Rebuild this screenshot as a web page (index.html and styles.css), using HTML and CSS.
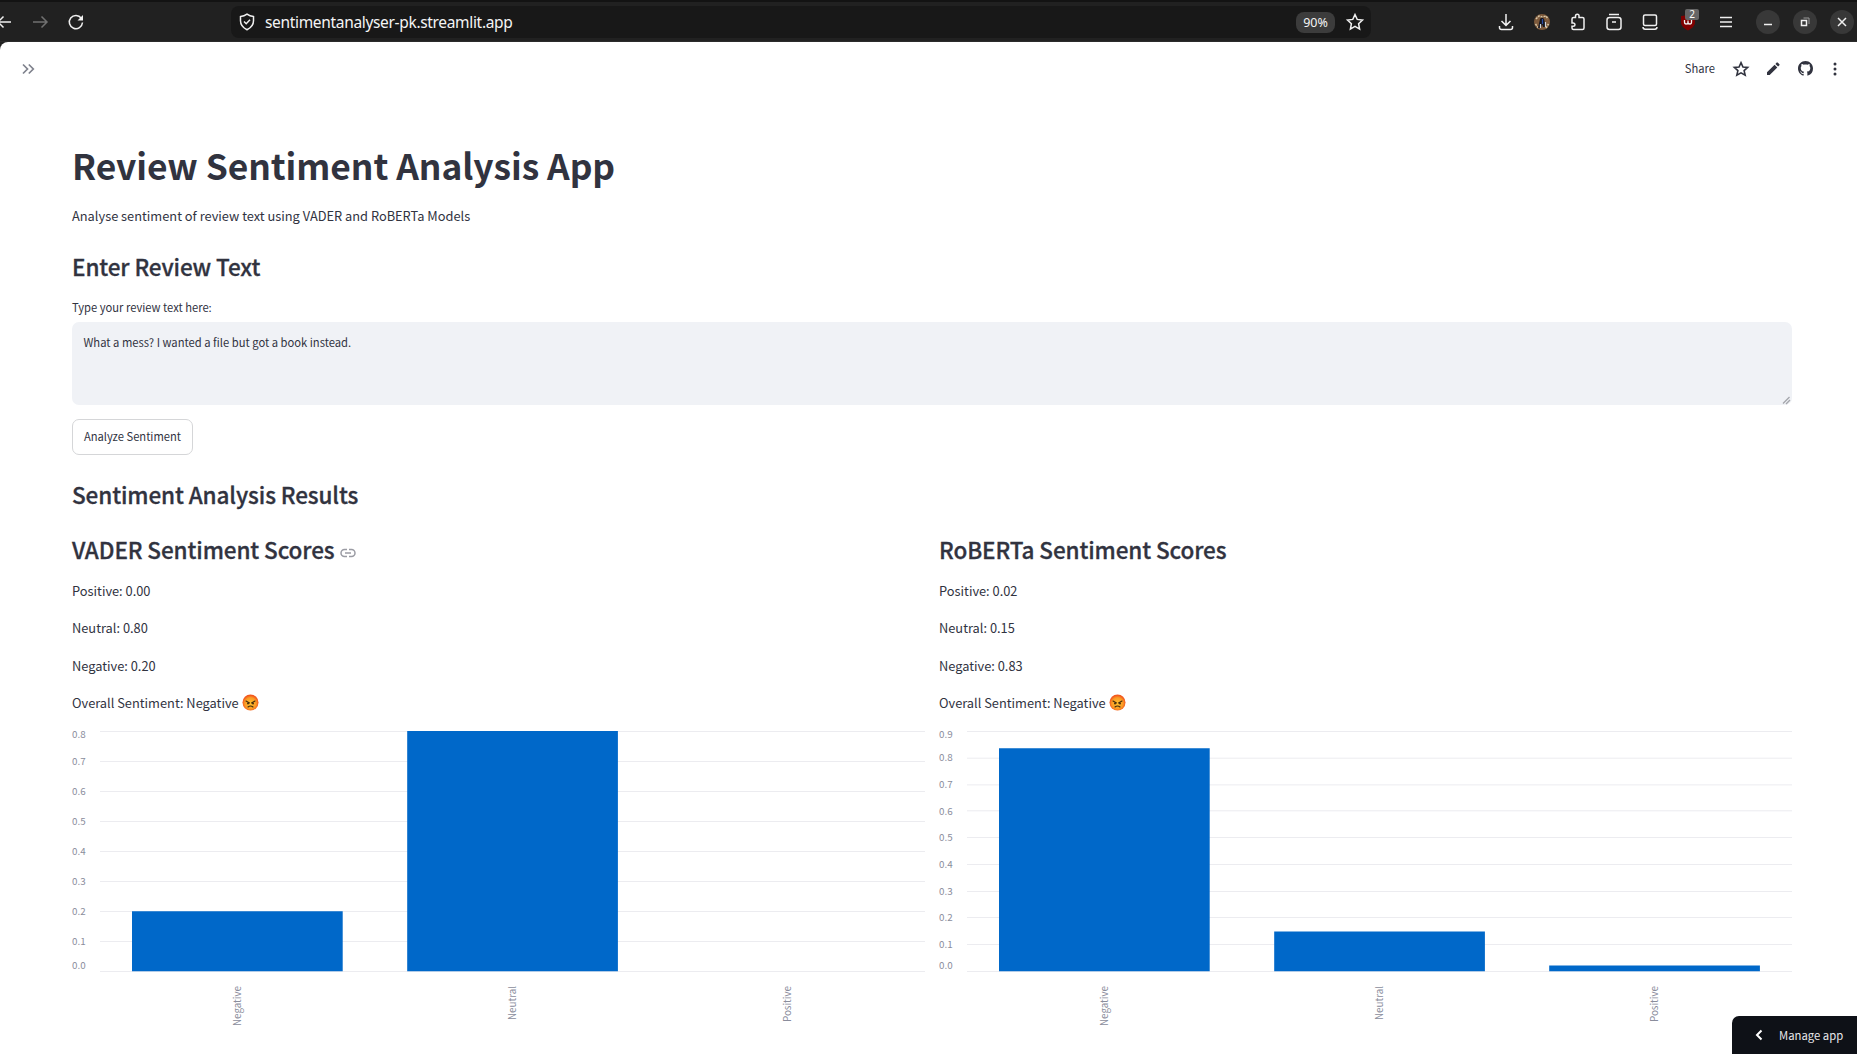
FILE: index.html
```html
<!DOCTYPE html>
<html lang="en">
<head>
<meta charset="utf-8">
<title>Review Sentiment Analysis App</title>
<link rel="stylesheet" href="styles.css">
</head>
<body>
<header class="browser">
  <div class="nav">
    <svg width="12" height="16" viewBox="0 0 12 16"><path d="M-3 8H11M3.500 2.500L-2 8l5.500 5.500" /></svg>
    <svg class="dim" width="16" height="16" viewBox="0 0 16 16"><path d="M1 8h13.500M9.500 2.500L15 8l-5.500 5.500"/></svg>
    <svg class="reload" width="16" height="16" viewBox="0 0 16 16"><path d="M13.300 4.200A6.600 6.600 0 1 0 14.500 8.500"/><path class="solid" d="M15 1v5.500H9.500z"/></svg>
  </div>
  <div class="urlbar">
    <svg width="16" height="18" viewBox="0 0 16 18"><path d="M8 1.200c2 1.500 4 2.200 6.500 2.400v4.200c0 4-2.500 7-6.500 8.900-4-1.900-6.500-4.900-6.500-8.900V3.600C4 3.400 6 2.700 8 1.200z"/><path d="M5 8.500l2.200 2.200L11 6.800"/></svg>
    <span class="url">sentimentanalyser-pk.streamlit.app</span>
    <span class="zoom">90%</span>
    <svg width="18" height="18" viewBox="0 0 18 18"><path d="M9 1.500l2.200 4.900 5.300.6-3.900 3.700 1 5.400L9 13.400l-4.600 2.700 1-5.400L1.500 7l5.300-.6z"/></svg>
  </div>
  <div class="tools">
    <svg width="16" height="18" viewBox="0 0 16 18"><path d="M8 1v11M3.500 8L8 12.400 12.500 8M1.500 13v1.500q0 2 2 2h9q2 0 2-2V13"/></svg>
    <svg width="16" height="18" viewBox="0 0 16 18"><circle cx="8" cy="9" r="8" fill="#7d5a3c" stroke="none"/><path d="M2 6l3-3 3 1 4-1 2 3M1.500 11l3 4M12 15l2.500-4" stroke="#d9c8a8" stroke-width="1.500" stroke-dasharray="2 1"/><path d="M6 6q2-3 4 0l2 8H9l-1-3-1 4H4z" fill="#15151f" stroke="none"/><path d="M8.500 6v5" stroke="#2c4fa5" stroke-width="1.200"/><path d="M6.500 11v4M11.500 9v5" stroke="#cfd6dc" stroke-width="1.200"/></svg>
    <svg width="16" height="18" viewBox="0 0 16 18"><path d="M2 7.500V6q0-1.500 1.500-1.500h2V3q0-1.800 1.800-1.800T9 3v1.500h3.500Q14 4.500 14 6v9q0 1.500-1.500 1.500h-9Q2 16.500 2 15v-1.800h1.200q1.800 0 1.800-1.500T3.200 10H2V7.500z"/></svg>
    <svg width="16" height="18" viewBox="0 0 16 18"><path d="M3 1.500h10M1 7q0-2.500 2.500-2.500h9Q15 4.500 15 7v7q0 2.500-2.500 2.500h-9Q1 16.500 1 14zM6 9h4"/></svg>
    <svg width="16" height="18" viewBox="0 0 16 18"><rect x="1.500" y="2" width="13" height="10.500" rx="1.500"/><path d="M1 14q0 2.200 2.200 2.200h9.600Q15 16.200 15 14"/></svg>
    <div class="ublock">
      <svg width="16" height="18" viewBox="0 0 16 18"><path d="M8 1c2 1.500 4 1.700 7 2v6c0 4-3 6.300-7 8.500-4-2.200-7-4.500-7-8.500V3c3-.3 5-.5 7-2z" fill="#7f0000" stroke="none"/><path d="M4.500 7v2q0 2 1.700 2T8 9.200V7.500m0 1.700q0 1.800 1.800 1.800t1.700-2V7" stroke-width="1.300"/></svg>
      <span class="count">2</span>
    </div>
    <svg width="16" height="18" viewBox="0 0 16 18"><path d="M2 4.500h12M2 9h12M2 13.500h12"/></svg>
  </div>
  <div class="window">
    <span><svg width="12" height="12" viewBox="0 0 12 12"><path d="M2 8.500h8"/></svg></span>
    <span><svg width="12" height="12" viewBox="0 0 12 12"><path d="M2.500 4.500h5v5h-5z"/><path class="back" d="M4.500 2H10v6" /></svg></span>
    <span><svg width="12" height="12" viewBox="0 0 12 12"><path d="M2 2l8 8M10 2l-8 8"/></svg></span>
  </div>
</header>
<div class="page">
  <div class="toolbar">
    <svg class="expand" width="14" height="12" viewBox="0 0 14 12"><path d="M2 1.500L6.500 6 2 10.500M7.800 1.500L12.300 6l-4.500 4.500"/></svg>
    <div class="actions">
      <span class="share">Share</span>
      <svg class="star" width="16" height="16" viewBox="0 0 18 18"><path d="M9 1.800l2.200 4.900 5.300.5-4 3.600 1.200 5.200L9 13.300 4.300 16l1.200-5.200-4-3.600 5.300-.5z"/></svg>
      <svg class="pencil" width="14" height="14" viewBox="0 0 14 14"><path d="M1 10.300L8.600 2.700l2.700 2.700L3.700 13H1zM9.400 1.900L10.700.6q.5-.4 1 0l1.700 1.700q.4.500 0 1l-1.300 1.300z"/></svg>
      <svg class="github" width="15" height="15" viewBox="0 0 16 16"><path d="M8 0C3.580 0 0 3.580 0 8c0 3.540 2.290 6.530 5.470 7.590.4.070.55-.17.55-.38 0-.19-.01-.82-.01-1.490-2.010.37-2.530-.49-2.690-.94-.09-.23-.48-.94-.82-1.130-.28-.15-.68-.52-.01-.53.63-.01 1.080.58 1.230.82.72 1.210 1.870.87 2.330.66.07-.52.28-.87.51-1.070-1.780-.2-3.640-.89-3.640-3.950 0-.87.31-1.590.82-2.150-.08-.2-.36-1.020.08-2.120 0 0 .67-.21 2.200.82.64-.18 1.320-.27 2-.27s1.360.09 2 .27c1.530-1.040 2.200-.82 2.200-.82.44 1.100.16 1.920.08 2.120.51.56.82 1.270.82 2.150 0 3.070-1.870 3.750-3.650 3.950.29.25.54.73.54 1.480 0 1.070-.01 1.930-.01 2.200 0 .21.15.46.55.38A8.010 8.010 0 0 0 16 8c0-4.420-3.580-8-8-8z"/></svg>
      <svg class="dots" width="4" height="14" viewBox="0 0 4 14"><circle cx="2" cy="2" r="1.500"/><circle cx="2" cy="7" r="1.500"/><circle cx="2" cy="12" r="1.500"/></svg>
    </div>
  </div>
  <main>
    <h1><span>Review Sentiment Analysis App</span></h1>
    <p class="intro">Analyse sentiment of review text using VADER and RoBERTa Models</p>
    <h2 class="enter">Enter Review Text</h2>
    <label for="review">Type your review text here:</label>
    <div class="field">
      <textarea id="review" spellcheck="false">What a mess? I wanted a file but got a book instead.</textarea>
      <svg class="grip" width="7" height="7" viewBox="0 0 7 7"><path d="M0 6.500L6.500 0M3 7L7 3"/></svg>
    </div>
    <button>Analyze Sentiment</button>
    <h2 class="results">Sentiment Analysis Results</h2>
    <div class="columns">
      <section>
        <h2>VADER Sentiment Scores <svg class="link" width="16" height="10" viewBox="0 0 16 10"><path d="M7 1.500H4.500a3.500 3.500 0 0 0 0 7H7M9 1.500h2.500a3.500 3.500 0 0 1 0 7H9M5 5h6"/></svg></h2>
        <p>Positive: 0.00</p>
        <p>Neutral: 0.80</p>
        <p>Negative: 0.20</p>
        <p>Overall Sentiment: Negative <svg class="emoji" width="17" height="17" viewBox="0 0 34 34"><defs><radialGradient id="face" cx=".5" cy=".55" r=".5"><stop offset=".2" stop-color="#fdb82c"/><stop offset=".7" stop-color="#fa9a25"/><stop offset="1" stop-color="#f2561d"/></radialGradient></defs><circle cx="17" cy="17" r="16" fill="url(#face)"/><path d="M8 14l7 4M26 14l-7 4M12 26q5-4 10 0" fill="none" stroke="#422b0d" stroke-width="2.200" stroke-linecap="round"/><circle cx="12" cy="19" r="2" fill="#422b0d"/><circle cx="22" cy="19" r="2" fill="#422b0d"/></svg></p>
        <svg class="chart" width="853" height="310" viewBox="0 0 853 310">
          <path class="grid" d="M28 10.500h825M28 40.500h825M28 70.500h825M28 100.500h825M28 130.500h825M28 160.500h825M28 190.500h825M28 220.500h825M28 250.500h825"/>
          <path class="bar" d="M60 190.300h210.700v59.900H60zM335.200 10h210.700v240.200H335.200z"/>
          <g class="ticks"><text x="0" y="18">0.8</text><text x="0" y="45">0.7</text><text x="0" y="75">0.6</text><text x="0" y="105">0.5</text><text x="0" y="135">0.4</text><text x="0" y="165">0.3</text><text x="0" y="195">0.2</text><text x="0" y="225">0.1</text><text x="0" y="249">0.0</text></g>
          <g class="names"><text transform="translate(169 265) rotate(-90)">Negative</text><text transform="translate(444 265) rotate(-90)">Neutral</text><text transform="translate(719 265) rotate(-90)">Positive</text></g>
        </svg>
      </section>
      <section>
        <h2>RoBERTa Sentiment Scores</h2>
        <p>Positive: 0.02</p>
        <p>Neutral: 0.15</p>
        <p>Negative: 0.83</p>
        <p>Overall Sentiment: Negative <svg class="emoji" width="17" height="17" viewBox="0 0 34 34"><circle cx="17" cy="17" r="16" fill="url(#face)"/><path d="M8 14l7 4M26 14l-7 4M12 26q5-4 10 0" fill="none" stroke="#422b0d" stroke-width="2.200" stroke-linecap="round"/><circle cx="12" cy="19" r="2" fill="#422b0d"/><circle cx="22" cy="19" r="2" fill="#422b0d"/></svg></p>
        <svg class="chart" width="853" height="310" viewBox="0 0 853 310">
          <path class="grid" d="M28 10.500h825M28 37.200h825M28 63.900h825M28 89.800h825M28 116.500h825M28 143.500h825M28 170.500h825M28 196.500h825M28 223.500h825M28 250.500h825"/>
          <path class="bar" d="M60 27.300h210.700v222.900H60zM335.200 210.400h210.700v39.800H335.200zM610.200 244.500h210.700v5.700H610.200z"/>
          <g class="ticks"><text x="0" y="18">0.9</text><text x="0" y="41">0.8</text><text x="0" y="68">0.7</text><text x="0" y="95">0.6</text><text x="0" y="121">0.5</text><text x="0" y="148">0.4</text><text x="0" y="175">0.3</text><text x="0" y="201">0.2</text><text x="0" y="228">0.1</text><text x="0" y="249">0.0</text></g>
          <g class="names"><text transform="translate(169 265) rotate(-90)">Negative</text><text transform="translate(444 265) rotate(-90)">Neutral</text><text transform="translate(719 265) rotate(-90)">Positive</text></g>
        </svg>
      </section>
    </div>
  </main>
</div>
<div class="manage"><svg width="8" height="12" viewBox="0 0 8 12"><path d="M6.500 1.500L2 6l4.500 4.500"/></svg><span>Manage app</span></div>
</body>
</html>
```
FILE: styles.css
```css
* { box-sizing: border-box; }
body { margin: 0; height: 1054px; overflow: hidden; background: #212121; color: #31333f; font-family: "Noto Sans CJK JP", "Noto Sans", sans-serif; font-size: 12.82px; }
svg { display: block; flex: none; overflow: visible; }

.browser { height: 42px; display: flex; align-items: center; border-top: 2px solid #131313; border-bottom: 1px solid #2b2b2b; padding: 1px 3px 0 0; }
.browser svg { fill: none; stroke: #f0f0f0; stroke-width: 1.5; }
.nav { width: 231px; display: flex; align-items: center; gap: 20px; }
.nav .dim { stroke: #707070; }
.nav .solid { fill: #f0f0f0; stroke: none; }
.urlbar { width: 1140px; height: 32px; border-radius: 8px; background: #181818; display: flex; align-items: center; padding: 0 7px 0 8px; }
.url { margin-left: 10px; flex: 1; color: #f4f4f4; font: 15.5px/32px "Noto Sans", sans-serif; letter-spacing: -.33px; }
.zoom { width: 39px; height: 21px; border-radius: 8px; background: #3c3c3c; color: #f4f4f4; font: 12.5px/21px "Noto Sans", sans-serif; text-align: center; margin-right: 11px; }
.tools { margin-left: 127px; display: flex; gap: 20px; align-items: center; }
.ublock { position: relative; margin: 0 1.5px 0 2px; }
.count { position: absolute; left: 5px; top: -4px; width: 14px; height: 11px; border-radius: 2px; background: #666; color: #fff; font: 10px/11px "Noto Sans", sans-serif; text-align: center; }
.window { margin-left: auto; display: flex; gap: 13px; }
.window .back { stroke: #999; stroke-width: 1; }
.window span { width: 24px; height: 24px; border-radius: 50%; background: #383838; display: flex; align-items: center; justify-content: center; }

.page { height: 1012px; background: #fff; border-top-left-radius: 8px; }
.toolbar { height: 54px; padding: 0 20px 0 21px; display: flex; align-items: center; justify-content: space-between; }
.expand { fill: none; stroke: #7f828d; stroke-width: 1.7; }
.actions { display: flex; align-items: center; padding-bottom: 1px; }
.share { font-size: 11.2px; margin-right: 17.5px; padding-bottom: 1px; }
.actions svg { fill: #31333f; }
.actions .star { fill: none; stroke: #31333f; stroke-width: 1.8; margin-right: 17px; }
.actions .pencil { margin-right: 18px; }
.actions .github { margin-right: 20.5px; }

main { padding: 44px 65px 0 72px; display: flex; flex-direction: column; align-items: flex-start; }
h1, h2, p { margin: 0; white-space: nowrap; }
h1 { font-size: 35.4px; line-height: 50px; font-weight: 700; letter-spacing: -.08px; }
.intro { line-height: 22px; margin-top: 15px; }
h2 { font-size: 22.5px; line-height: 30px; font-weight: 500; letter-spacing: -.11px; -webkit-text-stroke: .3px #31333f; }
.enter { margin-top: 24px; }
label { font-size: 11.2px; line-height: 18px; margin-top: 17px; }
.field { position: relative; margin-top: 6px; }
textarea { display: block; resize: none; width: 1720px; height: 83px; border: 0; border-radius: 7px; background: #f0f2f6; color: #31333f; font: inherit; font-size: 11.22px; line-height: 20px; padding: 10px 11.5px; }
.grip { position: absolute; right: 2px; bottom: 1px; fill: none; stroke: #a5a7ad; stroke-width: 1.4; }
button { width: 121px; height: 36px; margin-top: 14px; border: 1px solid #d5d6d8; border-radius: 7px; background: #fff; color: #31333f; font: inherit; font-size: 11.2px; padding: 0 0 2px; }
.results { margin-top: 24px; }
.columns { display: grid; grid-template-columns: 853px 853px; gap: 14px; margin-top: 25px; }
section h2 { display: flex; align-items: center; gap: 6px; margin-bottom: 16px; }
.link { fill: none; stroke: #9a9ba3; stroke-width: 1.5; margin-top: 7px; }
section p { display: flex; align-items: center; gap: 3px; line-height: 22px; margin-bottom: 15.3px; }
.chart { margin-top: -8px; }
.grid { fill: none; stroke: #ececf0; stroke-width: 1; }
.bar { fill: #0068c9; }
.chart text { fill: #8a8d9c; font-size: 9.8px; }
.ticks { transform: translateY(-.6px); }
.names text { text-anchor: end; }

.manage { position: fixed; right: 0; bottom: 0; width: 125px; height: 38px; border-top-left-radius: 7px; background: #0e1117; color: #e8e8ea; display: flex; align-items: center; gap: 16px; padding: 0 0 1px 23px; font-size: 11.3px; }
.manage svg { fill: none; stroke: #fff; stroke-width: 2; }
```
